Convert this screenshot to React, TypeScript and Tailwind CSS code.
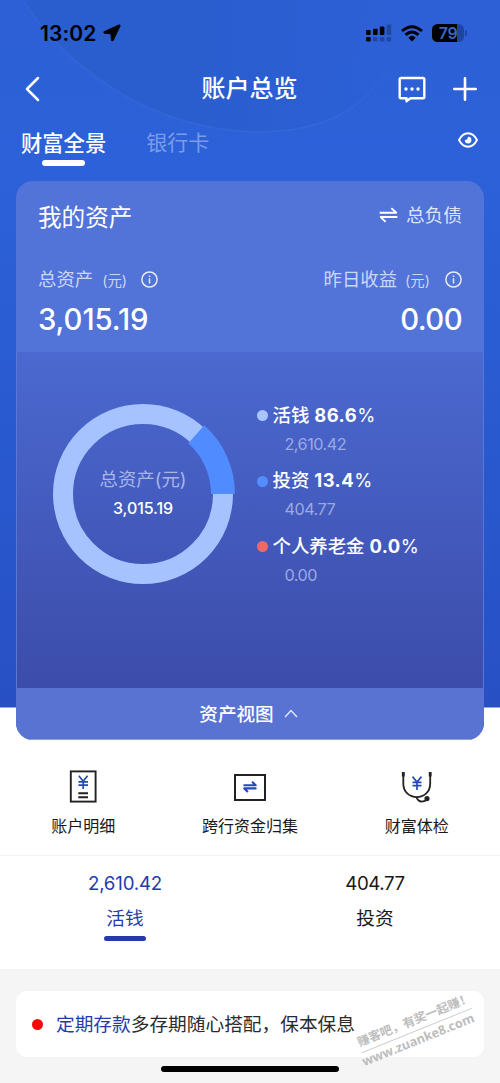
import React from 'react';

interface LegendItem {
    name: string;
    percent: string;
    amount: string;
    dot: string;
}

const legend: LegendItem[] = [
    { name: '活钱', percent: '86.6', amount: '2,610.42', dot: 'bg-[#a9c5ff]' },
    { name: '投资', percent: '13.4', amount: '404.77', dot: 'bg-[#538dff]' },
    { name: '个人养老金', percent: '0.0', amount: '0.00', dot: 'bg-[#ec6a66]' },
];

const StatusBar: React.FC = () => (
    <div className="flex h-[66px] items-center justify-between pl-[40px] pr-[33px] text-black">
        <div className="flex items-center gap-[5px]">
            <span className="w-[58px] whitespace-nowrap pt-px text-[21px] font-semibold leading-none tracking-[0.1px]">13:02</span>
            <svg width="18" height="18" viewBox="0 0 17 17">
                <path d="M15.3 1 L1.2 7.2 Q.4 8.2 1.5 8.7 L7.5 9.2 L8 15.1 Q8.6 16.3 9.6 15.3 L16 1.8 Q16.2.8 15.3 1Z" fill="currentColor" stroke="currentColor" strokeWidth="1" strokeLinejoin="round" />
            </svg>
        </div>
        <div className="flex items-center">
            <svg width="26" height="18" viewBox="0 0 26 18" fill="currentColor">
                <rect x="0" y="6" width="4.6" height="5" rx="1" />
                <rect x="7" y="4.8" width="4.6" height="6.2" rx="1" />
                <rect x="13.8" y="2.6" width="4.6" height="8.4" rx="1" />
                <rect x="20.6" y=".6" width="4.6" height="10.4" rx="1" opacity=".25" />
                <rect x="0" y="13" width="4.6" height="4.6" rx="1.3" />
                <g opacity=".25">
                    <rect x="7" y="13" width="4.6" height="4.6" rx="1.3" />
                    <rect x="13.8" y="13" width="4.6" height="4.6" rx="1.3" />
                    <rect x="20.6" y="13" width="4.6" height="4.6" rx="1.3" />
                </g>
            </svg>
            <svg className="ml-[9px]" width="22" height="17" viewBox="0 0 22 17" fill="none" stroke="currentColor" strokeWidth="2.9">
                <path d="M1 6 Q11-2.6 21 6" />
                <path d="M4.5 9.9 Q11 4 17.5 9.9" />
                <path d="M7.3 12.7 Q11 9 14.7 12.7 L11 16.4Z" fill="currentColor" stroke="none" />
            </svg>
            <div className="ml-[9px] flex h-[18px] w-[32px] items-center justify-center rounded-[5.5px] bg-[linear-gradient(90deg,#000_79%,#1e459f_79%)] text-[16px] font-semibold leading-none text-[#3a66c0]">
                <span className="tracking-[-0.5px]">79</span>
            </div>
            <span className="ml-[1px] h-[6px] w-[2px] rounded-r-full bg-[#1e459f]" />
        </div>
    </div>
);

const InfoIcon: React.FC = () => (
    <svg width="17" height="17" viewBox="0 0 17 17" fill="none" stroke="#e6ebfb" strokeWidth="1.5">
        <circle cx="8.5" cy="8.5" r="7.6" />
        <path d="M8.5 7.2V12.4M8.5 4.4V5.9" />
    </svg>
);

const SwapIcon: React.FC<{ className: string; width: number; strokeWidth: number }> = ({ className, width, strokeWidth }) => (
    <svg className={className} width={width} height={width * 0.85} viewBox="0 0 20 17" fill="none" stroke="currentColor" strokeWidth={strokeWidth} strokeLinejoin="round">
        <path d="M.7 6.1H18.2L13 1.2" />
        <path d="M19.3 10.6H1.8L7 15.7" />
    </svg>
);

const Donut: React.FC = () => {
    const angle = 0.134 * Math.PI * 2;
    const x = 92 + 80 * Math.cos(angle);
    const y = 92 - 80 * Math.sin(angle);
    return (
        <div className="relative h-[184px] w-[184px]">
            <svg width="184" height="184" viewBox="0 0 184 184" fill="none">
                <circle cx="92" cy="92" r="80" stroke="#a6c3ff" strokeWidth="20" />
                <path d={`M172 92 A80 80 0 0 0 ${x} ${y}`} stroke="#508bff" strokeWidth="24" />
            </svg>
            <div className="absolute inset-0 flex flex-col items-center pt-[63px]">
                <span className="text-[18.4px] leading-[28px] text-[#a9b5e6]">总资产(元)</span>
                <span className="mt-[5px] text-[16px] font-medium leading-[20px] tracking-[-0.1px] text-white">3,015.19</span>
            </div>
        </div>
    );
};

const App: React.FC = () => (
    <div className="relative h-[1083px] w-[500px] overflow-hidden bg-[#f5f5f5] font-['Inter','Noto_Sans_CJK_SC',sans-serif]">
        <div className="relative bg-[linear-gradient(180deg,#2d60d6_0px,#2c61d9_180px,#2959cf_440px,#2850c4_707px,#ffffff_708px)]">
            {/* soft disc behind the title */}
            <svg className="absolute left-0 top-0" width="500" height="180" viewBox="0 0 500 180" fill="none">
                <defs>
                    <linearGradient id="disc" x1="0" y1="0" x2="500" y2="0" gradientUnits="userSpaceOnUse">
                        <stop offset="0.4" stopColor="#2a5dce" />
                        <stop offset="0.8" stopColor="#2a5dce" stopOpacity="0" />
                    </linearGradient>
                    <linearGradient id="rim" x1="20" y1="0" x2="400" y2="0" gradientUnits="userSpaceOnUse">
                        <stop offset="0" stopColor="#3a6bdc" stopOpacity="0.3" />
                        <stop offset="0.8" stopColor="#3a6bdf" stopOpacity="0.6" />
                        <stop offset="1" stopColor="#3a6bdf" stopOpacity="0" />
                    </linearGradient>
                </defs>
                <path d="M23 0 C75 80 165 132 262 132 C335 130 365 105 392 63 L425 0Z" fill="url(#disc)" />
                <path d="M23 0 C75 80 165 132 262 132 C335 130 365 105 392 63" stroke="url(#rim)" strokeWidth="2" />
            </svg>
            <div className="relative">
                <StatusBar />
                <div className="grid h-[46px] grid-cols-3 items-center pl-[25px] pr-[23px] text-white">
                    <svg width="15" height="26" viewBox="0 0 15 26" fill="none" stroke="currentColor" strokeWidth="2.5" strokeLinecap="round" strokeLinejoin="round">
                        <path d="M13 2 L2 13 L13 24" />
                    </svg>
                    <h1 className="-ml-[3px] whitespace-nowrap text-center text-[24px] font-medium leading-[36px]">账户总览</h1>
                    <div className="flex items-center justify-end gap-[27px]">
                        <svg width="28" height="27" viewBox="0 0 28 27" fill="none" stroke="currentColor" strokeWidth="2.4" strokeLinejoin="round">
                            <path d="M3 2H25Q26.3 2 26.3 3.3V21Q26.3 22.3 25 22.3H12.5L8.5 25.2V22.3H3Q1.7 22.3 1.7 21V3.3Q1.7 2 3 2Z" />
                            <g fill="currentColor" stroke="none">
                                <circle cx="8" cy="13" r="1.7" />
                                <circle cx="14" cy="13" r="1.7" />
                                <circle cx="20" cy="13" r="1.7" />
                            </g>
                        </svg>
                        <svg width="24" height="24" viewBox="0 0 24 24" stroke="currentColor" strokeWidth="2.6" strokeLinecap="round">
                            <path d="M12 1.3V22.7M1.3 12H22.7" />
                        </svg>
                    </div>
                </div>
                <div className="flex h-[69px] items-start pl-[21px] pr-[22px] pt-[16px]">
                    <div className="flex flex-col items-center">
                        <span className="text-[21.3px] font-medium leading-[30px] text-white">财富全景</span>
                        <span className="mt-[2px] h-[6px] w-[43px] rounded-full bg-white" />
                    </div>
                    <span className="ml-[40px] text-[21px] leading-[30px] text-[#7b9ce7]">银行卡</span>
                    <svg className="ml-auto mt-[4px]" width="20" height="16" viewBox="0 0 20 16" fill="none" stroke="white" strokeWidth="1.9">
                        <path d="M1 8 Q4.5 1.3 10 1.3 Q15.5 1.3 19 8 Q15.5 14.7 10 14.7 Q4.5 14.7 1 8Z" />
                        <path d="M10 4.8 A3.3 3.3 0 1 1 6.8 8 Q9.5 8.2 10 4.8Z" fill="white" stroke="none" />
                    </svg>
                </div>

                <section className="mx-4 h-[559px] overflow-hidden rounded-[17px] bg-[#5273d8] text-white">
                    <div className="h-[171px] px-[22px] pt-[18px]">
                        <div className="flex h-[34px] items-center justify-between">
                            <h2 className="pt-[3px] text-[23.6px] leading-[34px]">我的资产</h2>
                            <div className="flex items-center gap-[8px] text-[18.7px] leading-[28px] text-[#dde4fa]">
                                <SwapIcon className="-mt-[2px] text-white" width={19} strokeWidth={2} />
                                <span>总负债</span>
                            </div>
                        </div>
                        <div className="mt-[32px] flex h-[28px] items-center justify-between text-[18.4px] text-[#ccd6f7]">
                            <div className="flex items-center">
                                <span className="pt-px">总资产</span>
                                <span className="ml-[9px] mt-[3px] text-[14.4px]">(元)</span>
                                <span className="ml-[14px]"><InfoIcon /></span>
                            </div>
                            <div className="flex items-center">
                                <span className="pt-px">昨日收益</span>
                                <span className="ml-[8px] mt-[3px] text-[14.4px]">(元)</span>
                                <span className="ml-[15px]"><InfoIcon /></span>
                            </div>
                        </div>
                        <div className="mt-[9px] flex justify-between text-[29.3px] font-medium leading-[36px] tracking-[-0.1px]">
                            <span>3,015.19</span>
                            <span className="tracking-[-0.6px]">0.00</span>
                        </div>
                    </div>
                    <div className="flex h-[336px] border-x border-[#5878d8] bg-[linear-gradient(180deg,#4b69d0_0%,#3c4caa_100%)] pl-[34px] pt-[49.5px]">
                        <Donut />
                        <ul className="ml-[21.5px] pt-px text-[18.4px]">
                            {legend.map(item => (
                                <li key={item.name} className="h-[65.5px]">
                                    <div className="flex h-[26px] items-center">
                                        <span className={`h-[11px] w-[11px] rounded-full ${item.dot}`} />
                                        <span className="ml-[5px] whitespace-nowrap font-medium">
                                            {item.name} <b className="font-bold tracking-[0.5px]">{item.percent}</b><span className="font-normal">%</span>
                                        </span>
                                    </div>
                                    <div className="ml-[28px] mt-[5px] text-[16.2px] leading-[20px] tracking-[-0.5px] text-[#9ca9e2]">{item.amount}</div>
                                </li>
                            ))}
                        </ul>
                    </div>
                    <div className="flex h-[52px] items-center justify-center gap-[10px] border-b border-[#88a2f0] bg-[#5873d2] pr-[3px] text-[18.6px] font-medium">
                        <span className="pt-[2px]">资产视图</span>
                        <svg width="14" height="9" viewBox="0 0 14 9" fill="none" stroke="#dfe5fa" strokeWidth="1.5">
                            <path d="M1 8 L7 1.5 L13 8" />
                        </svg>
                    </div>
                </section>

                <div className="grid h-[116px] grid-cols-3 border-b border-[#f4f4f4] pt-[29px] text-[16px] leading-[24px] text-[#191919]">
                    <div className="flex flex-col items-center gap-[9px]">
                        <svg width="36" height="36" viewBox="0 0 36 36" fill="none" stroke="#222" strokeWidth="1.9">
                            <rect x="5.8" y="2.4" width="24.8" height="30.2" />
                            <path d="M13.3 24.2H23M13.3 28.2H23" />
                            <path d="M13.8 6.8L18.2 12.2L22.6 6.8M18.2 12.2V20M13.4 12.8H23M13.4 16.1H23" stroke="#2549b8" strokeWidth="1.7" />
                        </svg>
                        <span>账户明细</span>
                    </div>
                    <div className="flex flex-col items-center gap-[9px]">
                        <div className="flex h-[36px] items-center">
                            <div className="flex h-[27px] w-[32px] items-center justify-center border-2 border-[#222]">
                                <SwapIcon className="text-[#2549b8]" width={14} strokeWidth={3} />
                            </div>
                        </div>
                        <span>跨行资金归集</span>
                    </div>
                    <div className="flex flex-col items-center gap-[9px]">
                        <svg width="36" height="36" viewBox="0 0 36 36" fill="none" stroke="#222" strokeWidth="1.8">
                            <path d="M4.3 4V14.5C4.3 32.6 31.2 32.6 31.2 14.5V4" />
                            <path d="M4.3 3V7.4M31.2 3V7.4" strokeWidth="2.8" />
                            <path d="M17.5 28Q18.5 32.4 23 32.6Q27 32.4 28 29.8" />
                            <circle cx="28" cy="29.6" r="1.7" fill="#222" />
                            <path d="M13.5 7.6L18 13L22.5 7.6M18 13V21M13.5 13.4H22.5M13.5 16.7H22.5" stroke="#2549b8" strokeWidth="1.7" />
                        </svg>
                        <span>财富体检</span>
                    </div>
                </div>
            </div>
        </div>

        <div className="grid h-[113px] grid-cols-2 bg-white pt-[16px] text-[18.7px] text-[#191919]">
            <div className="flex flex-col items-center text-[#253bab]">
                <span className="leading-[24px] tracking-[-0.2px]">2,610.42</span>
                <span className="mt-[9px] leading-[28px]">活钱</span>
                <span className="mt-[3px] h-[5px] w-[42px] rounded-full bg-[#253bab]" />
            </div>
            <div className="flex flex-col items-center">
                <span className="leading-[24px] tracking-[-0.4px]">404.77</span>
                <span className="mt-[9px] leading-[28px]">投资</span>
            </div>
        </div>

        <div className="relative mx-4 mt-[22px] flex h-[66px] items-center rounded-[11px] bg-white pl-4 text-[18.7px] text-[#2b2b2b]">
            <span className="h-[11px] w-[11px] rounded-full bg-[#f50a0a]" />
            <span className="ml-[13px] whitespace-nowrap pt-[2px]"><span className="text-[#253bab]">定期存款</span>多存期随心搭配，保本保息</span>
            <div className="absolute left-[341px] top-[19px] w-[119px] -rotate-[22deg] whitespace-nowrap text-[#bdbdbd]">
                <div className="border-b border-[#cfcfcf] text-[12.2px] font-bold leading-[20px]">赚客吧，有奖一起赚！</div>
                <div className="-ml-[3px] font-['Open_Sans',sans-serif] text-[12.7px] font-bold leading-[17px]">www.zuanke8.com</div>
            </div>
        </div>
        <div className="mx-auto mt-[9px] h-[6px] w-[178px] rounded-full bg-black" />
    </div>
);

export default App;
